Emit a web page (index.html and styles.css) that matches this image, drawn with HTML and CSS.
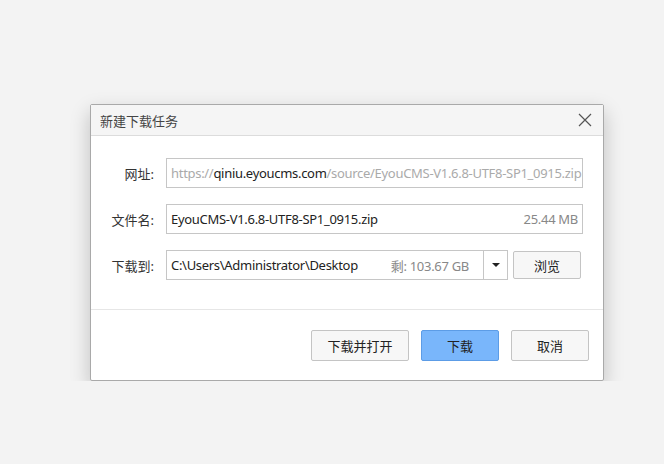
FILE: index.html
```html
<!DOCTYPE html>
<html lang="zh-CN">
<head>
    <meta charset="UTF-8">
    <title>新建下载任务</title>
    <link rel="stylesheet" href="styles.css">
</head>
<body>
    <div class="dialog">
        <div class="title-bar">
            <span class="title">新建下载任务</span>
            <svg class="close" width="14" height="14" viewBox="0 0 14 14">
                <path d="M1 1 L13 13 M13 1 L1 13" stroke="#555" stroke-width="1.2" fill="none"/>
            </svg>
        </div>
        <div class="content">
            <div class="row">
                <label class="label">网址:</label>
                <div class="field url">
                    <span class="grey">https://</span><span class="host">qiniu.eyoucms.com</span><span class="grey">/source/EyouCMS-V1.6.8-UTF8-SP1_0915.zip</span>
                </div>
            </div>
            <div class="row">
                <label class="label">文件名:</label>
                <div class="field">
                    <span class="value">EyouCMS-V1.6.8-UTF8-SP1_0915.zip</span>
                    <span class="meta">25.44 MB</span>
                </div>
            </div>
            <div class="row">
                <label class="label">下载到:</label>
                <div class="field path">
                    <span class="value">C:\Users\Administrator\Desktop</span>
                    <span class="meta">剩: 103.67 GB</span>
                    <span class="drop"><span class="arrow"></span></span>
                </div>
                <button class="btn browse">浏览</button>
            </div>
        </div>
        <div class="footer">
            <button class="btn wide">下载并打开</button>
            <button class="btn primary">下载</button>
            <button class="btn">取消</button>
        </div>
    </div>
</body>
</html>
```

FILE: styles.css
```css
body {
    margin: 0;
    background-color: #f3f3f3;
    font-family: "Noto Sans", "Noto Sans CJK SC", sans-serif;
    font-size: 13px;
    color: #333;
}
.dialog {
    box-sizing: border-box;
    margin: 104px 0 0 90px;
    width: 514px;
    height: 277px;
    background-color: white;
    border: 1px solid #a9a9a9;
    border-radius: 2px;
    box-shadow: 0 8px 20px rgba(0,0,0,0.22);
    display: flex;
    flex-direction: column;
}
.title-bar {
    height: 30px;
    background-color: #f5f5f5;
    border-bottom: 1px solid #dcdcdc;
    display: flex;
    align-items: center;
    justify-content: space-between;
    padding: 0 11px 0 9px;
}
.title {
    color: #444;
}
.content {
    flex: 1;
    padding-top: 22px;
    border-bottom: 1px solid #e6e6e6;
}
.row {
    display: flex;
    align-items: center;
    height: 30px;
    margin-bottom: 16px;
}
.label {
    width: 63px;
    text-align: right;
    padding-right: 12px;
    color: #333;
}
.field {
    box-sizing: border-box;
    width: 417px;
    height: 30px;
    border: 1px solid #c6c6c6;
    display: flex;
    align-items: center;
    padding: 0 4px 0 4px;
    white-space: nowrap;
    overflow: hidden;
    letter-spacing: -0.3px;
}
.url {
    padding-right: 0;
}
.grey {
    color: #aaa;
}
.host {
    color: #222;
}
.value {
    flex: 1;
    color: #222;
}
.meta {
    color: #888;
}
.path {
    width: 342px;
    padding-right: 0;
}
.path .meta {
    margin-right: 14px;
}
.drop {
    width: 23px;
    height: 28px;
    border-left: 1px solid #c6c6c6;
    display: flex;
    align-items: center;
    justify-content: center;
}
.arrow {
    width: 0;
    height: 0;
    border-left: 4px solid transparent;
    border-right: 4px solid transparent;
    border-top: 4px solid #222;
}
.btn {
    box-sizing: border-box;
    width: 78px;
    height: 31px;
    background-color: #f7f7f7;
    border: 1px solid #c4c4c4;
    border-radius: 2px;
    font-family: inherit;
    font-size: 13px;
    color: #222;
    padding: 0;
}
.browse {
    width: 68px;
    height: 28px;
    margin-left: 5px;
}
.footer {
    height: 70px;
    display: flex;
    align-items: center;
    justify-content: flex-end;
    gap: 12px;
    padding-right: 14px;
}
.wide {
    width: 98px;
}
.primary {
    background-color: #79b6fb;
    border-color: #5c9ce6;
}
```
